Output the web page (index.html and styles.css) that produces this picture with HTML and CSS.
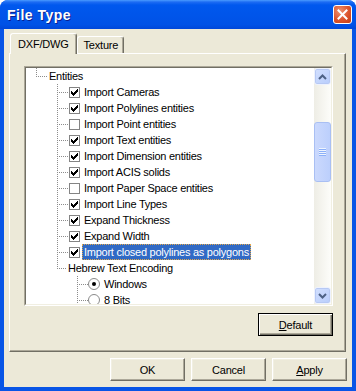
FILE: index.html
```html
<!DOCTYPE html>
<html lang="en">
<head>
    <meta charset="UTF-8">
    <title>File Type</title>
    <link rel="stylesheet" href="styles.css">
</head>
<body>
    <div class="window">
        <div class="title-bar">
            <span class="title">File Type</span>
            <span class="close-btn">
                <svg width="11" height="11" viewBox="0 0 11 11"><path d="M1.5 1.5l8 8M9.5 1.5l-8 8" stroke="#fff" stroke-width="2" stroke-linecap="square"/></svg>
            </span>
        </div>

        <div class="client">
            <div class="tabs">
                <div class="tab active">DXF/DWG</div>
                <div class="tab">Texture</div>
            </div>

            <div class="pane">
                <div class="tree">
                    <div class="tree-inner">
                        <div class="tree-items">
                            <div class="node lv1 last"><span class="branch"></span><span class="label">Entities</span></div>
                            <div class="node lv2"><span class="branch"></span><span class="check on"><svg width="9" height="9" viewBox="0 0 9 9"><path d="M1 3h1v3H1zM2 4h1v3H2zM3 5h1v3H3zM4 4h1v3H4zM5 3h1v3H5zM6 2h1v3H6zM7 1h1v3H7z"/></svg></span><span class="label">Import Cameras</span></div>
                            <div class="node lv2"><span class="branch"></span><span class="check on"><svg width="9" height="9" viewBox="0 0 9 9"><path d="M1 3h1v3H1zM2 4h1v3H2zM3 5h1v3H3zM4 4h1v3H4zM5 3h1v3H5zM6 2h1v3H6zM7 1h1v3H7z"/></svg></span><span class="label">Import Polylines entities</span></div>
                            <div class="node lv2"><span class="branch"></span><span class="check"></span><span class="label">Import Point entities</span></div>
                            <div class="node lv2"><span class="branch"></span><span class="check on"><svg width="9" height="9" viewBox="0 0 9 9"><path d="M1 3h1v3H1zM2 4h1v3H2zM3 5h1v3H3zM4 4h1v3H4zM5 3h1v3H5zM6 2h1v3H6zM7 1h1v3H7z"/></svg></span><span class="label">Import Text entities</span></div>
                            <div class="node lv2"><span class="branch"></span><span class="check on"><svg width="9" height="9" viewBox="0 0 9 9"><path d="M1 3h1v3H1zM2 4h1v3H2zM3 5h1v3H3zM4 4h1v3H4zM5 3h1v3H5zM6 2h1v3H6zM7 1h1v3H7z"/></svg></span><span class="label">Import Dimension entities</span></div>
                            <div class="node lv2"><span class="branch"></span><span class="check on"><svg width="9" height="9" viewBox="0 0 9 9"><path d="M1 3h1v3H1zM2 4h1v3H2zM3 5h1v3H3zM4 4h1v3H4zM5 3h1v3H5zM6 2h1v3H6zM7 1h1v3H7z"/></svg></span><span class="label">Import ACIS solids</span></div>
                            <div class="node lv2"><span class="branch"></span><span class="check"></span><span class="label">Import Paper Space entities</span></div>
                            <div class="node lv2"><span class="branch"></span><span class="check on"><svg width="9" height="9" viewBox="0 0 9 9"><path d="M1 3h1v3H1zM2 4h1v3H2zM3 5h1v3H3zM4 4h1v3H4zM5 3h1v3H5zM6 2h1v3H6zM7 1h1v3H7z"/></svg></span><span class="label">Import Line Types</span></div>
                            <div class="node lv2"><span class="branch"></span><span class="check on"><svg width="9" height="9" viewBox="0 0 9 9"><path d="M1 3h1v3H1zM2 4h1v3H2zM3 5h1v3H3zM4 4h1v3H4zM5 3h1v3H5zM6 2h1v3H6zM7 1h1v3H7z"/></svg></span><span class="label">Expand Thickness</span></div>
                            <div class="node lv2"><span class="branch"></span><span class="check on"><svg width="9" height="9" viewBox="0 0 9 9"><path d="M1 3h1v3H1zM2 4h1v3H2zM3 5h1v3H3zM4 4h1v3H4zM5 3h1v3H5zM6 2h1v3H6zM7 1h1v3H7z"/></svg></span><span class="label">Expand Width</span></div>
                            <div class="node lv2"><span class="branch"></span><span class="check on"><svg width="9" height="9" viewBox="0 0 9 9"><path d="M1 3h1v3H1zM2 4h1v3H2zM3 5h1v3H3zM4 4h1v3H4zM5 3h1v3H5zM6 2h1v3H6zM7 1h1v3H7z"/></svg></span><span class="label selected">Import closed polylines as polygons</span></div>
                            <div class="node lv2 last plain"><span class="branch"></span><span class="label">Hebrew Text Encoding</span></div>
                            <div class="node lv3"><span class="branch"></span><span class="radio"><svg width="12" height="12" viewBox="0 0 12 12"><circle cx="6" cy="6" r="5.5" fill="#fff" stroke="#8a8a8a"/><circle cx="6" cy="6" r="2" fill="#000"/></svg></span><span class="label">Windows</span></div>
                            <div class="node lv3"><span class="branch"></span><span class="radio"><svg width="12" height="12" viewBox="0 0 12 12"><circle cx="6" cy="6" r="5.5" fill="#fff" stroke="#8a8a8a"/></svg></span><span class="label">8 Bits</span></div>
                        </div>

                        <div class="scrollbar">
                            <div class="sb-btn">
                                <svg width="9" height="6" viewBox="0 0 9 6"><path d="M1 5l3.5-3.5L8 5" fill="none" stroke="#4d6185" stroke-width="2"/></svg>
                            </div>
                            <div class="thumb"><span class="grip"></span></div>
                            <div class="sb-btn bottom">
                                <svg width="9" height="6" viewBox="0 0 9 6"><path d="M1 1l3.5 3.5L8 1" fill="none" stroke="#4d6185" stroke-width="2"/></svg>
                            </div>
                        </div>
                    </div>
                </div>

                <div class="pane-actions">
                    <button class="btn default"><u>D</u>efault</button>
                </div>
            </div>

            <div class="actions">
                <button class="btn">OK</button>
                <button class="btn">Cancel</button>
                <button class="btn"><u>A</u>pply</button>
            </div>
        </div>
    </div>
</body>
</html>
```

FILE: styles.css
```css
body {
    margin: 0;
    font-family: "Liberation Sans", Arial, sans-serif;
    font-size: 11px;
    color: #000;
}
.window {
    width: 356px;
    height: 391px;
    display: flex;
    flex-direction: column;
    background: #0855e6;
    border-radius: 8px 8px 0 0;
    overflow: hidden;
}
.title-bar {
    height: 29px;
    flex: none;
    display: flex;
    align-items: center;
    justify-content: space-between;
    padding: 0 4px 0 7px;
    background: linear-gradient(to bottom, #4a9bff 0, #1d6cf3 2px, #0058ee 5px, #0055ea 50%, #0052e6 85%, #0047d9 100%);
}
.title {
    color: #fff;
    font-weight: bold;
    font-size: 14px;
    letter-spacing: 0.5px;
    text-shadow: 1px 1px #0c1f8e;
}
.close-btn {
    width: 19px;
    height: 19px;
    box-sizing: border-box;
    border: 1px solid #fff;
    border-radius: 3px;
    background: radial-gradient(circle at 35% 30%, #f09270, #db532c 55%, #c23d13);
    display: flex;
    align-items: center;
    justify-content: center;
}
.client {
    flex: 1;
    margin: 0 4px 4px;
    background: #ece9d8;
    padding: 4px 6px 6px 5px;
    display: flex;
    flex-direction: column;
}
.tabs {
    display: flex;
    align-items: flex-end;
    height: 20px;
    padding-left: 1px;
}
.tab {
    height: 17px;
    box-sizing: border-box;
    padding: 0 5px 0 6px;
    border: 1px solid;
    border-color: #fff #716f64 transparent #fff;
    border-bottom: none;
    border-radius: 3px 3px 0 0;
    box-shadow: inset -1px 0 #aca899;
    display: flex;
    align-items: center;
    letter-spacing: -0.2px;
}
.tab.active {
    height: 21px;
    margin-bottom: -1px;
    padding: 0 7px 0 7px;
    background: #ece9d8;
    position: relative;
    z-index: 1;
}
.pane {
    height: 299px;
    box-sizing: border-box;
    border: 1px solid;
    border-color: #fff #716f64 #716f64 #fff;
    box-shadow: inset -1px -1px #aca899;
    padding: 12px 12px 0 14px;
    display: flex;
    flex-direction: column;
}
.tree {
    height: 240px;
    box-sizing: border-box;
    border: 1px solid;
    border-color: #aca899 #fff #fff #aca899;
}
.tree-inner {
    height: 100%;
    box-sizing: border-box;
    border: 1px solid;
    border-color: #716f64 #f1efe2 #f1efe2 #716f64;
    background: #fff;
    display: flex;
    overflow: hidden;
}
.tree-items {
    flex: 1;
    overflow: hidden;
}
.node {
    height: 16px;
    display: flex;
    align-items: center;
    white-space: nowrap;
}
.lv1 { padding-left: 10px; }
.lv2 { padding-left: 31px; }
.lv3 { padding-left: 51px; }
.branch {
    flex: none;
    align-self: stretch;
    width: 11px;
    background-image:
        repeating-linear-gradient(to bottom, #8c8c8c 0 1px, transparent 1px 2px),
        repeating-linear-gradient(to right, #8c8c8c 0 1px, transparent 1px 2px);
    background-size: 1px 100%, 100% 1px;
    background-position: left top, left 8px;
    background-repeat: no-repeat;
}
.last .branch {
    background-size: 1px 9px, 100% 1px;
}
.plain .branch {
    width: 9px;
}
.check {
    flex: none;
    width: 11px;
    height: 11px;
    box-sizing: border-box;
    margin-left: 1px;
    border: 1px solid #848484;
    background: #fff;
    display: flex;
    align-items: center;
    justify-content: center;
}
.radio {
    flex: none;
    width: 12px;
    height: 12px;
    display: flex;
}
.label {
    height: 16px;
    box-sizing: border-box;
    padding: 0 1px;
    border: 1px solid transparent;
    line-height: 14px;
    letter-spacing: -0.25px;
}
.check + .label,
.radio + .label {
    margin-left: 2px;
}
.label.selected {
    background: #316ac5;
    color: #fff;
    border: 1px dotted #e2a84d;
}
.scrollbar {
    flex: none;
    width: 17px;
    display: flex;
    flex-direction: column;
    background: linear-gradient(to right, #eeede5, #fdfdfa);
}
.sb-btn {
    height: 17px;
    flex: none;
    box-sizing: border-box;
    border: 1px solid #eef2fd;
    border-radius: 3px;
    background: linear-gradient(135deg, #d3e0fe, #b8cdfc);
    box-shadow: inset 0 0 0 1px #b7c9f4;
    display: flex;
    align-items: center;
    justify-content: center;
}
.sb-btn.bottom {
    margin-top: auto;
}
.thumb {
    height: 60px;
    margin-top: 37px;
    flex: none;
    box-sizing: border-box;
    border: 1px solid #a9bff3;
    border-radius: 3px;
    background: linear-gradient(to right, #cbd9fd, #bccffc);
    display: flex;
    align-items: center;
    justify-content: center;
}
.grip {
    width: 7px;
    height: 8px;
    background: repeating-linear-gradient(to bottom, #eef4fe 0 1px, #8cb0f8 1px 2px);
}
.pane-actions {
    display: flex;
    justify-content: flex-end;
    margin-top: 7px;
}
.btn {
    width: 75px;
    height: 23px;
    box-sizing: border-box;
    padding: 0;
    font: inherit;
    letter-spacing: -0.2px;
    color: #000;
    background: #ece9d8;
    border: 1px solid;
    border-color: #fff #716f64 #716f64 #fff;
    box-shadow: inset -1px -1px #aca899, inset 1px 1px #f1efe2;
}
.btn.default {
    border: 1px solid #000;
    box-shadow: inset 1px 1px #fff, inset -1px -1px #716f64, inset -2px -2px #aca899;
}
.actions {
    display: flex;
    justify-content: flex-end;
    gap: 6px;
    margin-top: 6px;
    margin-right: -1px;
}
```
